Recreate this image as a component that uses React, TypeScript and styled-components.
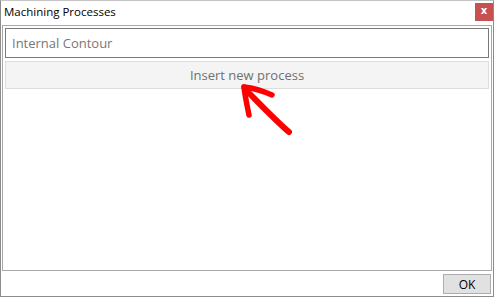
import styled, { createGlobalStyle } from 'styled-components'

const GlobalStyle = createGlobalStyle`
  html, body {
    margin: 0;
    padding: 0;
    background: #ffffff;
  }
  * {
    box-sizing: border-box;
  }
`

function App() {
  return (
    <>
      <GlobalStyle />
      <Window>
        <TitleBar>
          <Title>Machining Processes</Title>
          <CloseButton>x</CloseButton>
        </TitleBar>
        <Panel>
          <TextField>Internal Contour</TextField>
          <InsertButton>Insert new process</InsertButton>
        </Panel>
        <Footer>
          <OkButton>OK</OkButton>
        </Footer>
        <Arrow width="70" height="60" viewBox="0 0 70 60">
          <g fill="none" stroke="#ff0000" strokeLinecap="round" strokeLinejoin="round">
            <path d="M6 8 C 20 22, 34 37, 50 51" strokeWidth="6" />
            <path d="M5 6 C 14 7, 24 10, 33 14" strokeWidth="5.5" />
            <path d="M5 6 C 6 15, 8 24, 10 34" strokeWidth="5.5" />
          </g>
        </Arrow>
      </Window>
    </>
  )
}

const Window = styled.div`
  position: relative;
  width: 494px;
  height: 297px;
  display: flex;
  flex-direction: column;
  border: 1px solid #8c8c8c;
  border-top-color: #c4c4c4;
  background: #ffffff;
  font-family: 'Segoe UI', 'Open Sans', sans-serif;
`

const TitleBar = styled.div`
  height: 24px;
  display: flex;
  justify-content: space-between;
  align-items: flex-start;
`

const Title = styled.div`
  padding: 3px 0 0 3px;
  font-size: 11.5px;
  line-height: 16px;
  color: #000000;
`

const CloseButton = styled.div`
  width: 18px;
  height: 18px;
  margin-top: 2px;
  background: #c75050;
  color: #ffffff;
  font-family: 'DejaVu Sans', sans-serif;
  font-size: 10px;
  font-weight: 700;
  line-height: 16px;
  text-align: center;
`

const Panel = styled.div`
  flex: 1;
  margin: 0 1px;
  border: 1px solid #a8a8a8;
  padding: 2px;
  display: flex;
  flex-direction: column;
  gap: 3px;
`

const TextField = styled.div`
  height: 30px;
  border: 1px solid #7a7a7a;
  padding: 0 6px;
  display: flex;
  align-items: center;
  font-size: 13px;
  color: #777777;
`

const InsertButton = styled.div`
  height: 28px;
  border: 1px solid #dddddd;
  background: #f4f4f4;
  display: flex;
  align-items: center;
  justify-content: center;
  font-size: 13px;
  color: #707070;
`

const Footer = styled.div`
  height: 25px;
  display: flex;
  justify-content: flex-end;
  padding: 3px 2px 0 0;
`

const OkButton = styled.div`
  width: 48px;
  height: 20px;
  border: 1px solid #adadad;
  background: #e1e1e1;
  display: flex;
  align-items: center;
  justify-content: center;
  font-size: 12px;
  color: #000000;
`

const Arrow = styled.svg`
  position: absolute;
  left: 238px;
  top: 80px;
  pointer-events: none;
`

export default App
